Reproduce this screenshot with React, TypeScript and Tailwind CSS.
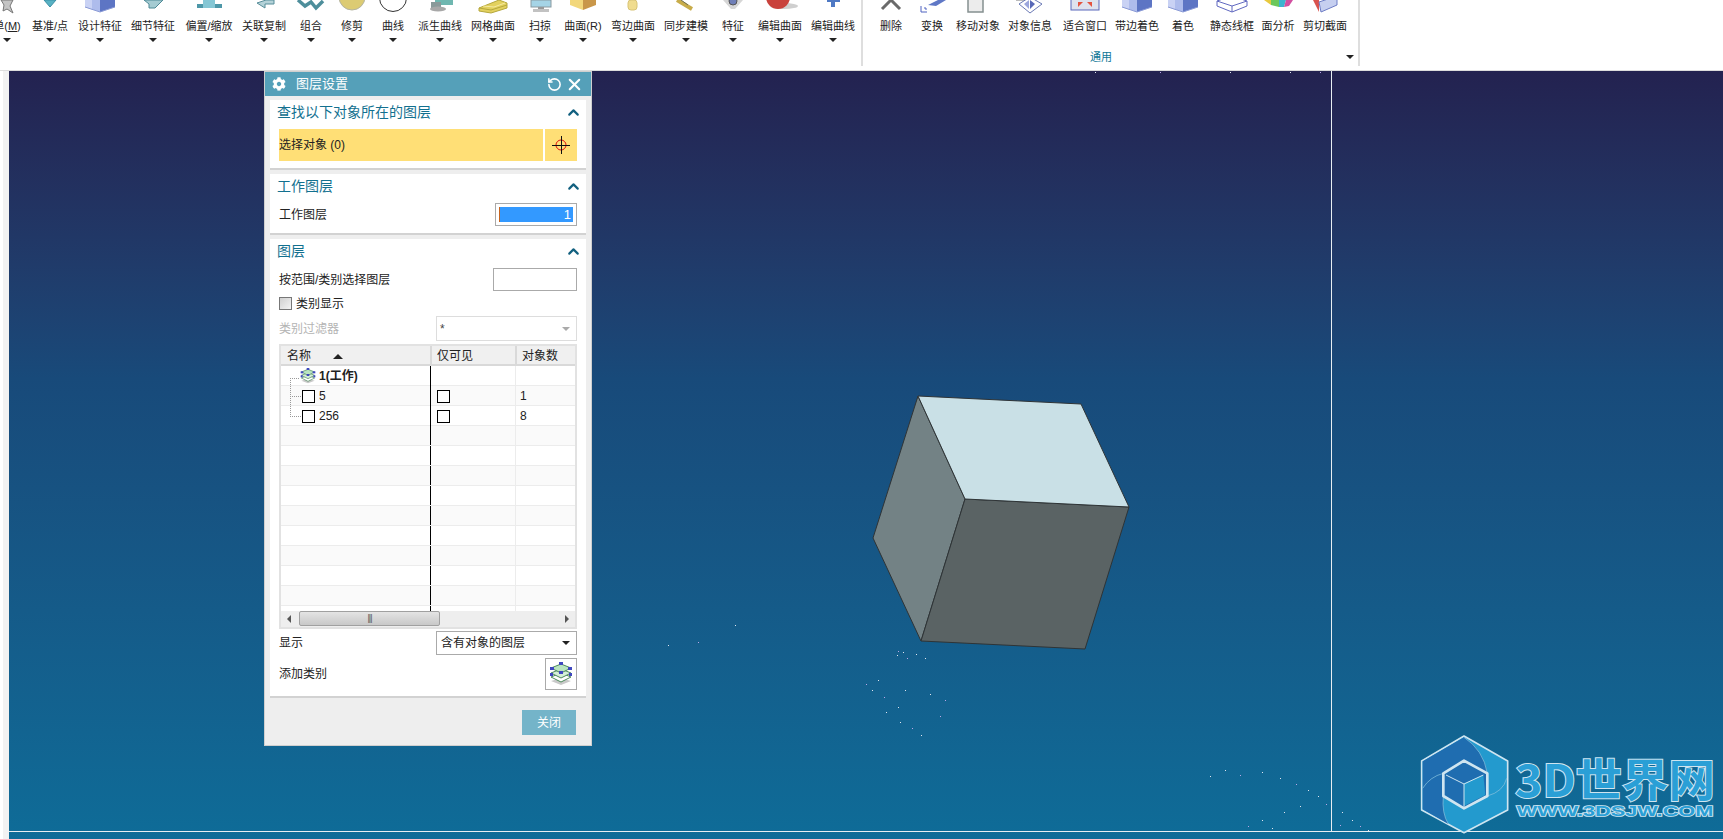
import type { ReactNode } from "react";
import { FaCog } from "react-icons/fa";
import { RotateCw, X, ChevronUp } from "lucide-react";

type Tool = { label: ReactNode; w: number; icon: ReactNode };

const blueCube = (
  <>
    <polygon points="3,0 18,0 18,12 3,7" fill="#aebcec" />
    <polygon points="3,0 10,0 10,9.5 3,7" fill="#c9d2f4" />
    <polygon points="18,0 33,0 33,7 18,12" fill="#5d75c4" />
    <polyline points="3,7 18,12 33,7" fill="none" stroke="#8b9bd6" />
  </>
);

const mainTools: Tool[] = [
  { label: <>单(<u>M</u>)</>, w: 44, icon: <polygon points="12,0 24,0 21,6 24,13 18,9 14,11 15,5" fill="#c4c4c4" stroke="#777" strokeWidth="1" /> },
  { label: "基准/点", w: 42, icon: <polygon points="12,0 24,0 18,7" fill="#58b2c4" stroke="#3b8fa5" /> },
  { label: "设计特征", w: 58, icon: blueCube },
  { label: "细节特征", w: 48, icon: <polygon points="9,0 14,4 14,8 20,8 28,0" fill="#a5cbd2" stroke="#4f8a96" /> },
  { label: "偏置/缩放", w: 64, icon: <><rect x="6" y="4" width="25" height="4" fill="#4d97a8" /><rect x="12" y="0" width="12" height="8" fill="#85c7d5" /></> },
  { label: "关联复制", w: 46, icon: <polygon points="28,0 20,0 11,3 19,8 19,4 28,4" fill="#b4d2d8" stroke="#578e9a" /> },
  { label: "组合", w: 48, icon: <><polyline points="5,0 12,6 18,2 23,8 30,1" fill="none" stroke="#4d8e9b" strokeWidth="3.5" /></> },
  { label: "修剪", w: 34, icon: <circle cx="18" cy="-3" r="13" fill="#dccb73" stroke="#b4b4a0" /> },
  { label: "曲线", w: 48, icon: <circle cx="18" cy="-2" r="13.5" fill="#fff" stroke="#333" strokeWidth="1" /> },
  { label: "派生曲线", w: 46, icon: <><rect x="13" y="0" width="18" height="5" fill="#6fb7b0" /><rect x="9" y="2" width="10" height="6" fill="#8a9a9a" /><ellipse cx="16" cy="9" rx="8" ry="2.5" fill="#a8a8a8" /></> },
  { label: "网格曲面", w: 60, icon: <><polygon points="4,8 24,0 32,3 32,8 16,13 4,11" fill="#e3d15e" stroke="#b5a73c" /><polyline points="4,8 16,10 32,5" fill="none" stroke="#b5a73c" /><polyline points="8,6 19,7 30,3" fill="none" stroke="#f5eaa0" /></> },
  { label: "扫掠", w: 34, icon: <><rect x="9" y="0" width="20" height="7" fill="#a5d4e6" stroke="#8a9aa0" /><rect x="16" y="7" width="6" height="2" fill="#999" /><rect x="11" y="9" width="16" height="3" fill="#c2c2c2" /></> },
  { label: "曲面(R)", w: 52, icon: <><polygon points="5,0 18,0 18,10 5,5" fill="#f2d77b" /><polygon points="18,0 31,0 31,5 18,10" fill="#c9974a" /></> },
  { label: "弯边曲面", w: 48, icon: <rect x="13" y="0" width="9" height="10" rx="3" fill="#f0dc8e" stroke="#d8c476" /> },
  { label: "同步建模", w: 58, icon: <><line x1="9" y1="0" x2="24" y2="9" stroke="#c8ac4a" strokeWidth="4" /><line x1="13" y1="0" x2="20" y2="5" stroke="#6f6f55" strokeWidth="1" /></> },
  { label: "特征", w: 36, icon: <><polygon points="8,0 28,0 20,9 16,9" fill="#d6d6d6" /><circle cx="18" cy="1" r="4" fill="#6f7fb8" stroke="#555" /></> },
  { label: "编辑曲面", w: 58, icon: <><ellipse cx="22" cy="6" rx="14" ry="3" fill="#cfcfcf" /><circle cx="16" cy="-3" r="12" fill="#c9423c" /></> },
  { label: "编辑曲线", w: 48, icon: <><rect x="16" y="0" width="4" height="7" fill="#4f79c4" /><rect x="12" y="0" width="13" height="2" fill="#4f79c4" /></> },
];

const commonTools: Tool[] = [
  { label: "删除", w: 48, icon: <polyline points="9,9 18,0 27,9" fill="none" stroke="#6a6a6a" strokeWidth="3" /> },
  { label: "变换", w: 34, icon: <><polygon points="14,5 24,0 32,0 22,6" fill="#5f78c6" /><polyline points="7,6 7,12 13,12" fill="none" stroke="#4f62c0" /><polyline points="11,7 11,9 13,9" fill="none" stroke="#4f62c0" /></> },
  { label: "移动对象", w: 58, icon: <><rect x="8" y="-3" width="15" height="15" fill="#ececec" stroke="#859090" strokeWidth="1.5" /></> },
  { label: "对象信息", w: 46, icon: <><rect x="4" y="0" width="12" height="1" fill="#bbb" /><polygon points="18,-3 30,4 18,13 7,4" fill="#fff" stroke="#6a79b5" /><polygon points="18,0 23,4 18,9" fill="#5868b8" /><polygon points="17,0 12,4 17,9" fill="#9ba6dc" /></> },
  { label: "适合窗口", w: 64, icon: <><rect x="4" y="-3" width="28" height="13" fill="#dfe2ee" stroke="#5a68bb" /><polygon points="11,2 16,2 11,7" fill="#e5533f" /><polygon points="25,2 20,2 25,7" fill="#e5533f" /></> },
  { label: "带边着色", w: 40, icon: blueCube },
  { label: "着色", w: 52, icon: blueCube },
  { label: "静态线框", w: 46, icon: <g fill="none" stroke="#6068c0"><polygon points="3,1 18,-4 33,1 33,6 18,12 3,6" /><polyline points="3,1 18,6 33,1" /><line x1="18" y1="6" x2="18" y2="12" /></g> },
  { label: "面分析", w: 46, icon: <><polygon points="4,0 11,0 11,5" fill="#e8c93e" /><polygon points="11,0 19,0 19,7 11,5" fill="#6cc75a" /><polygon points="19,0 26,0 24,7 19,7" fill="#3cb4cf" /><polygon points="26,0 33,0 29,6 24,7" fill="#d24fa0" /></> },
  { label: "剪切截面", w: 48, icon: <><polygon points="6,0 12,0 12,12" fill="#d9534f" /><polygon points="12,2 30,-4 30,5 14,12" fill="#c6cff0" stroke="#6d7cc5" /></> },
];

function ToolButton({ tool, caret }: { tool: Tool; caret: boolean }) {
  return (
    <div className="flex flex-col items-center shrink-0" style={{ width: tool.w }}>
      <svg width="36" height="16" viewBox="0 0 36 16" className="overflow-hidden shrink-0">
        {tool.icon}
      </svg>
      <span className="h-5 leading-5 text-[11px] whitespace-nowrap text-[#222]">{tool.label}</span>
      {caret && <div className="mt-[2px] w-0 h-0 border-x-[4px] border-x-transparent border-t-[4px] border-t-[#222]" />}
    </div>
  );
}

function Toolbar() {
  return (
    <div className="flex h-[71px] shrink-0 bg-white border-b border-[#dcdcdc] overflow-hidden">
      {/* main group */}
      <div className="flex -ml-[15px] w-[878px] shrink-0 border-r-2 border-[#dedede] h-[66px]">
        {mainTools.map((t, i) => (
          <ToolButton key={i} tool={t} caret />
        ))}
      </div>
      {/* common group */}
      <div className="flex flex-col w-[497px] shrink-0 border-r-2 border-[#dedede] h-[66px]">
        <div className="flex pl-[4px] h-[48px]">
          {commonTools.map((t, i) => (
            <ToolButton key={i} tool={t} caret={false} />
          ))}
        </div>
        <div className="flex items-center h-[18px]">
          <span className="ml-[227px] text-[11px] text-[#0e7696] leading-none">通用</span>
          <div className="ml-[234px] w-0 h-0 border-x-[4px] border-x-transparent border-t-[4px] border-t-[#222]" />
        </div>
      </div>
    </div>
  );
}

function LayerIcon({ size }: { size: number }) {
  return (
    <svg width={size} height={size} viewBox="0 0 24 24">
      <polygon points="12,16 22,19 12,23 2,19" fill="#c9c9c9" />
      <polygon points="12,11 22,15 12,20 2,15" fill="#fff" stroke="#4c8a5a" />
      <polygon points="12,7 22,11 12,16 2,11" fill="#d5efd8" stroke="#4c8a5a" />
      <polygon points="12,2 22,6 12,11 2,6" fill="#b9e4c0" stroke="#4c8a5a" />
      <g fill="#4048c0">
        <rect x="10" y="0" width="4" height="3" />
        <rect x="1" y="5" width="4" height="3" />
        <rect x="19" y="5" width="4" height="3" />
        <rect x="10" y="9" width="4" height="3" />
        <rect x="1" y="11" width="3" height="3" />
        <rect x="20" y="11" width="3" height="3" />
      </g>
    </svg>
  );
}

function SectionHead({ title }: { title: string }) {
  return (
    <div className="flex items-center justify-between h-[26px] pb-[2px] pl-[7px] pr-[4px] shrink-0">
      <span className="text-sm text-[#12708f]">{title}</span>
      <ChevronUp size={17} strokeWidth={3} className="text-[#12607f]" />
    </div>
  );
}

function Box() {
  return <div className="w-[13px] h-[13px] border-[1.5px] border-black bg-white shrink-0" />;
}

function Tree({ kind }: { kind: "mid" | "last" }) {
  return (
    <svg width="21" height="20" className="shrink-0">
      <line x1="9.5" y1="0" x2="9.5" y2={kind === "last" ? 10 : 20} stroke="#999" strokeDasharray="1 1" />
      <line x1="9" y1="10.5" x2="20" y2="10.5" stroke="#999" strokeDasharray="1 1" />
    </svg>
  );
}

const rows = Array.from({ length: 13 });

function LayerTable() {
  return (
    <div className="mt-[3px] h-[285px] border-2 border-[#e2e2e2] text-xs text-[#222] shrink-0 flex flex-col">
      <div className="grid grid-cols-[149px_85px_60px] h-[20px] bg-[#f0f0f0] border-b-2 border-[#d9d9d9] shrink-0">
        <div className="flex items-center pl-[6px] pt-[2px]">
          名称
          <div className="ml-[22px] w-0 h-0 border-x-[5px] border-x-transparent border-b-[5px] border-b-[#222]" />
        </div>
        <div className="flex items-center pl-[5px] pt-[2px] border-l-2 border-[#d9d9d9]">仅可见</div>
        <div className="flex items-center pl-[5px] pt-[2px] border-l-2 border-[#d9d9d9]">对象数</div>
      </div>
      <div className="h-[245px] overflow-hidden shrink-0">
        {rows.map((_, i) => (
          <div key={i} className={`grid grid-cols-[149px_85px_60px] h-[20px] border-b border-[#ececec] ${i % 2 === 1 ? "bg-[#fafafa]" : "bg-white"}`}>
            <div className="flex items-center">
              {i === 0 && (
                <>
                  <svg width="19" height="20" className="shrink-0">
                    <line x1="9.5" y1="12" x2="9.5" y2="20" stroke="#999" strokeDasharray="1 1" />
                    <line x1="9" y1="12.5" x2="19" y2="12.5" stroke="#999" strokeDasharray="1 1" />
                  </svg>
                  <LayerIcon size={16} />
                  <span className="ml-[3px] font-bold">1(工作)</span>
                </>
              )}
              {i === 1 && (
                <>
                  <Tree kind="mid" />
                  <Box />
                  <span className="ml-[4px]">5</span>
                </>
              )}
              {i === 2 && (
                <>
                  <Tree kind="last" />
                  <Box />
                  <span className="ml-[4px]">256</span>
                </>
              )}
            </div>
            <div className="flex items-center pl-[6px] border-l border-black">{(i === 1 || i === 2) && <Box />}</div>
            <div className="flex items-center pl-[4px] border-l border-[#ececec]">
              {i === 1 && "1"}
              {i === 2 && "8"}
            </div>
          </div>
        ))}
      </div>
      <div className="relative flex items-center justify-between h-[16px] bg-[#eeeeee] px-[6px] shrink-0">
        <div className="w-0 h-0 border-y-[4px] border-y-transparent border-r-[4px] border-r-[#555]" />
        <div className="absolute left-[18px] top-0 w-[141px] h-[15px] rounded-[2px] border border-[#a0a0a0] bg-linear-to-b from-[#e4e4e4] to-[#c8c8c8] flex items-center justify-center">
          <span className="text-[9px] leading-none text-[#555] tracking-[-1px]">|||</span>
        </div>
        <div className="w-0 h-0 border-y-[4px] border-y-transparent border-l-[4px] border-l-[#555]" />
      </div>
    </div>
  );
}

function LayerDialog() {
  return (
    <div className="absolute left-[255px] top-0 w-[328px] h-[675px] bg-[#eeeeee] border border-[#cfcfcf] flex flex-col text-xs text-[#222]">
      {/* title */}
      <div className="flex items-center h-[24px] bg-[#55a0b9] text-white shrink-0 pl-[7px] pr-[8px]">
        <FaCog size={14} />
        <span className="ml-[10px] text-[13px]">图层设置</span>
        <RotateCw size={15} strokeWidth={2.5} className="ml-auto -scale-x-100" />
        <X size={19} strokeWidth={2.6} className="ml-[3px] -mr-[1px]" />
      </div>
      <div className="flex flex-col gap-[4px] pt-[4px] px-[5px] shrink-0">
        {/* find */}
        <section className="h-[70px] bg-white border-b-2 border-[#d2d2d2] flex flex-col">
          <SectionHead title="查找以下对象所在的图层" />
          <div className="flex mt-[3px] px-[9px] gap-[2px]">
            <div className="flex-1 h-[32px] bg-[#ffdf76] flex items-center">选择对象 (0)</div>
            <div className="w-[32px] h-[32px] bg-[#ffdf76] flex items-center justify-center">
              <svg width="20" height="20" viewBox="0 0 20 20">
                <circle cx="10" cy="10" r="5" fill="none" stroke="#e01010" strokeWidth="1" />
                <path d="M10.5 1v18M1 10.5h18" stroke="#111" strokeWidth="1" />
              </svg>
            </div>
          </div>
        </section>
        {/* work layer */}
        <section className="h-[61px] bg-white border-b-2 border-[#d2d2d2] flex flex-col">
          <SectionHead title="工作图层" />
          <div className="flex items-center justify-between mt-[3px] px-[9px]">
            <span>工作图层</span>
            <div className="w-[82px] h-[23px] border border-[#aaaaaa] p-[3px]">
              <div className="h-full bg-[#3399ff] border-l border-[#c8641e] text-white text-right pr-[2px] leading-[16px] text-[13px]">1</div>
            </div>
          </div>
        </section>
        {/* layers */}
        <section className="h-[459px] bg-white border-b-2 border-[#d2d2d2] flex flex-col">
          <SectionHead title="图层" />
          <div className="flex flex-col px-[9px] mt-[3px]">
            <div className="flex items-center justify-between h-[23px]">
              <span>按范围/类别选择图层</span>
              <div className="w-[84px] h-[23px] border border-[#aaaaaa]" />
            </div>
            <div className="flex items-center h-[25px]">
              <div className="w-[13px] h-[13px] border border-[#777] bg-linear-to-br from-[#d0d0d0] to-[#f4f4f4]" />
              <span className="ml-[4px]">类别显示</span>
            </div>
            <div className="flex items-center justify-between h-[25px]">
              <span className="text-[#b4b4b4]">类别过滤器</span>
              <div className="w-[141px] h-[25px] border border-[#dddddd] flex items-center justify-between pl-[3px] pr-[6px] text-[#444]">
                <span>*</span>
                <div className="w-0 h-0 border-x-[4px] border-x-transparent border-t-[4px] border-t-[#aaa]" />
              </div>
            </div>
            <LayerTable />
            <div className="flex items-center justify-between h-[24px] mt-[2px]">
              <span>显示</span>
              <div className="w-[141px] h-[24px] border border-[#aaaaaa] flex items-center justify-between pl-[4px] pr-[6px]">
                <span>含有对象的图层</span>
                <div className="w-0 h-0 border-x-[4px] border-x-transparent border-t-[4px] border-t-[#222]" />
              </div>
            </div>
            <div className="flex items-center justify-between h-[32px] mt-[3px]">
              <span>添加类别</span>
              <div className="w-[32px] h-[32px] border border-[#aaaaaa] flex items-center justify-center">
                <LayerIcon size={24} />
              </div>
            </div>
          </div>
        </section>
      </div>
      <div className="flex justify-end mt-[12px] pr-[15px]">
        <button className="w-[54px] h-[25px] bg-[#74b4c9] text-white text-xs">关闭</button>
      </div>
    </div>
  );
}

const specks: [number, number][] = [
  [898, 651], [903, 652], [897, 655], [907, 658], [916, 654], [925, 658],
  [866, 684], [872, 690], [878, 680], [884, 697], [905, 690], [930, 694], [945, 700],
  [886, 712], [900, 722], [912, 728], [921, 735], [898, 707], [940, 716],
  [1210, 776], [1225, 770], [1240, 775], [1262, 772], [1280, 778], [1296, 784], [1308, 790],
  [1318, 796], [1326, 804], [1342, 812], [1352, 820], [1360, 826], [1300, 806], [1284, 812],
  [1248, 826], [1262, 820], [1272, 828], [1340, 825], [1368, 830],
  [668, 645], [698, 642], [735, 625], [1095, 72], [1160, 72], [1230, 72], [1290, 72], [1320, 72],
];

function Scene() {
  return (
    <svg className="absolute inset-0" width="1714" height="768" viewBox="9 71 1714 768">
      <line x1="1331.5" y1="71" x2="1331.5" y2="831" stroke="#e8eef2" />
      <line x1="9" y1="831.5" x2="1723" y2="831.5" stroke="#e8eef2" />
      <g stroke="#2f3436" strokeWidth="1" strokeLinejoin="round">
        <polygon points="918,396 965,499 921,641 873,538" fill="#738285" />
        <polygon points="965,499 1129,507 1085,649 921,641" fill="#5a6364" />
        <polygon points="918,396 1081,404 1129,507 965,499" fill="#c9e0e6" />
      </g>
      {specks.map(([x, y], i) => (
        <rect key={i} x={x} y={y} width="1" height="1" fill={i % 3 === 0 ? "#b9a6e8" : "#dfe6f0"} />
      ))}
    </svg>
  );
}

// logo drawn in 3x coordinates of its box
function Logo() {
  return (
    <svg className="absolute right-0 bottom-0" width="323" height="119" viewBox="0 0 969 357">
      <polygon points="192,48 323,123 323,270 192,338 65,270 65,123" fill="#239ace" stroke="#cfe5f0" strokeWidth="5" strokeLinejoin="round" />
      <path d="M68 124 L192 52 Q250 90 262 160 L192 122 L130 160 Q90 170 68 205 Z" fill="#1f6db0" />
      <path d="M68 205 Q90 170 130 160 L130 228 Q125 280 145 312 L68 268 Z" fill="#1f6db0" />
      <path d="M192 52 Q250 90 262 160 M68 205 Q90 170 130 160 M130 228 Q125 280 145 312 M262 228 Q310 215 320 175" fill="none" stroke="#8fc4de" strokeWidth="2" />
      <polygon points="192,122 262,160 262,228 192,265 130,228 130,160" fill="#1f6db0" stroke="#cfe5f0" strokeWidth="8" strokeLinejoin="round" />
      <polygon points="192,190 250,165 256,225 192,258" fill="#239ace" />
      <path d="M138 165 L192 192 L250 165 M192 192 L192 262" fill="none" stroke="#cfe5f0" strokeWidth="3" />
      <text x="345" y="232" fontSize="135" fontWeight="700" textLength="600" lengthAdjust="spacingAndGlyphs" fill="#2a9fd6" stroke="#cfe5f0" strokeWidth="6" paintOrder="stroke" className="font-['Noto_Sans_CJK_SC',sans-serif]">
        3D世界网
      </text>
      <text x="350" y="288" fontSize="46" fontWeight="700" textLength="590" lengthAdjust="spacingAndGlyphs" fill="#2a9fd6" stroke="#cfe5f0" strokeWidth="5" paintOrder="stroke" className="font-['Liberation_Sans',sans-serif]">
        WWW.3DSJW.COM
      </text>
    </svg>
  );
}

export default function App() {
  return (
    <div className="w-[1723px] h-[839px] overflow-hidden flex flex-col bg-white font-['Liberation_Sans','Noto_Sans_CJK_SC',sans-serif]">
      <Toolbar />
      <div className="flex flex-1">
        {/* left strip */}
        <div className="w-[9px] shrink-0 bg-[#f2f2f2] border-l-[3px] border-white" />
        {/* graphics window */}
        <div className="relative flex-1 bg-linear-to-b from-[#232250] via-[#184a7a] via-40% to-[#0e6c98]">
          <Scene />
          <LayerDialog />
          <Logo />
        </div>
      </div>
    </div>
  );
}
